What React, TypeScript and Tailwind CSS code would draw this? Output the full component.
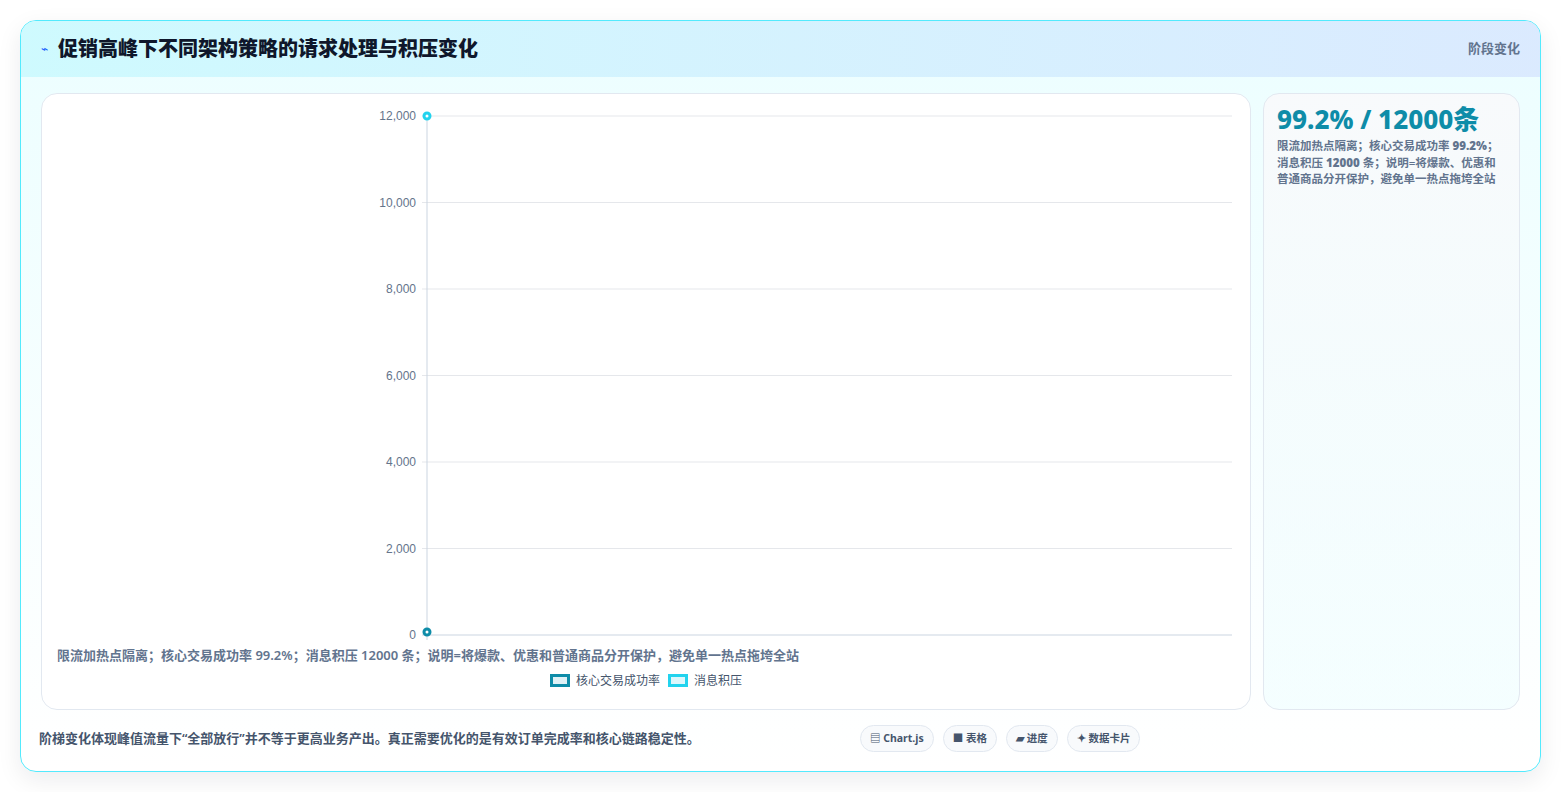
const ticks = [12000, 10000, 8000, 6000, 4000, 2000, 0];

function Chart() {
  const top = 22;
  const bottom = 541;
  const left = 385;
  const right = 1190;
  const step = (bottom - top) / 6;
  return (
    <svg width="1209" height="548" className="block">
      {ticks.map((t, i) => {
        const y = top + i * step;
        return (
          <g key={t}>
            <line x1={left - 5} x2={right} y1={y} y2={y} stroke={i === 6 ? '#cbd5e1' : '#e5e7eb'} strokeWidth="1" />
            <text x={left - 11} y={y + 4} textAnchor="end" fontSize="12" fill="#64748b" fontFamily="'Liberation Sans', Arial, sans-serif">
              {t.toLocaleString('en-US')}
            </text>
          </g>
        );
      })}
      <line x1={left} x2={left} y1={top} y2={bottom + 5} stroke="#cbd5e1" strokeWidth="1" />
      <circle cx={left} cy={top} r="3" fill="#ffffff" stroke="#22d3ee" strokeWidth="3" />
      <circle cx={left} cy={bottom - 3} r="3" fill="#ffffff" stroke="#0e8ca8" strokeWidth="3" />
    </svg>
  );
}

export default function App() {
  const font = { fontFamily: "'Noto Sans', 'Noto Sans CJK SC', sans-serif" };
  return (
    <div className="min-h-screen bg-white p-5" style={font}>
      <div className="flex h-[752px] flex-col overflow-hidden rounded-2xl border border-cyan-300 bg-gradient-to-b from-cyan-50 to-white shadow-[0_8px_24px_rgba(15,23,42,0.08)]">
        <div className="flex h-[56px] shrink-0 items-center justify-between bg-gradient-to-r from-cyan-100 to-blue-100 px-5">
          <div className="flex items-center gap-2.5">
            <span className="text-[12px] text-blue-600">⌁</span>
            <h1 className="text-[20px] font-extrabold text-slate-900">促销高峰下不同架构策略的请求处理与积压变化</h1>
          </div>
          <span className="text-[13px] font-semibold text-slate-500">阶段变化</span>
        </div>
        <div className="flex flex-1 gap-3 px-5 pt-4">
          <div className="flex h-[617px] w-[1210px] flex-col rounded-2xl border border-slate-200 bg-white">
            <Chart />
            <p className="mt-[4px] pl-[15px] text-[13px] font-semibold text-slate-500">
              限流加热点隔离；核心交易成功率 99.2%；消息积压 12000 条；说明=将爆款、优惠和普通商品分开保护，避免单一热点拖垮全站
            </p>
            <div className="mt-[6px] flex items-center justify-center gap-2 text-[12px] text-slate-600">
              <span className="flex items-center gap-1.5">
                <span className="h-[13px] w-[20px] border-[3px] border-[#0e8ca8] bg-[#dff1f6]" />
                核心交易成功率
              </span>
              <span className="flex items-center gap-1.5">
                <span className="h-[13px] w-[20px] border-[3px] border-[#22d3ee] bg-[#dcf7fc]" />
                消息积压
              </span>
            </div>
          </div>
          <div className="h-[617px] flex-1 rounded-2xl border border-slate-200 bg-gradient-to-b from-slate-50 to-cyan-50/50 px-[13px] pt-[9px]">
            <div className="text-[26px] font-extrabold leading-[32px] text-[#0e8ca8]">99.2% / 12000条</div>
            <p className="mt-[3px] text-[11.5px] font-semibold leading-[16.5px] text-slate-500">
              限流加热点隔离；核心交易成功率 <b>99.2%</b>；消息积压 <b>12000</b> 条；说明=将爆款、优惠和普通商品分开保护，避免单一热点拖垮全站
            </p>
          </div>
        </div>
        <div className="flex h-[62px] items-center px-[18px] pb-[4px]">
          <p className="w-[821px] text-[13px] font-semibold text-slate-600">
            阶梯变化体现峰值流量下“全部放行”并不等于更高业务产出。真正需要优化的是有效订单完成率和核心链路稳定性。
          </p>
          <div className="flex gap-[9px]">
            {['▤ Chart.js', '■ 表格', '▰ 进度', '✦ 数据卡片'].map((l) => (
              <span key={l} className="rounded-full border border-slate-200 bg-slate-50 px-[9px] py-[5px] text-[10.5px] font-bold text-slate-600">
                {l}
              </span>
            ))}
          </div>
        </div>
      </div>
    </div>
  );
}
